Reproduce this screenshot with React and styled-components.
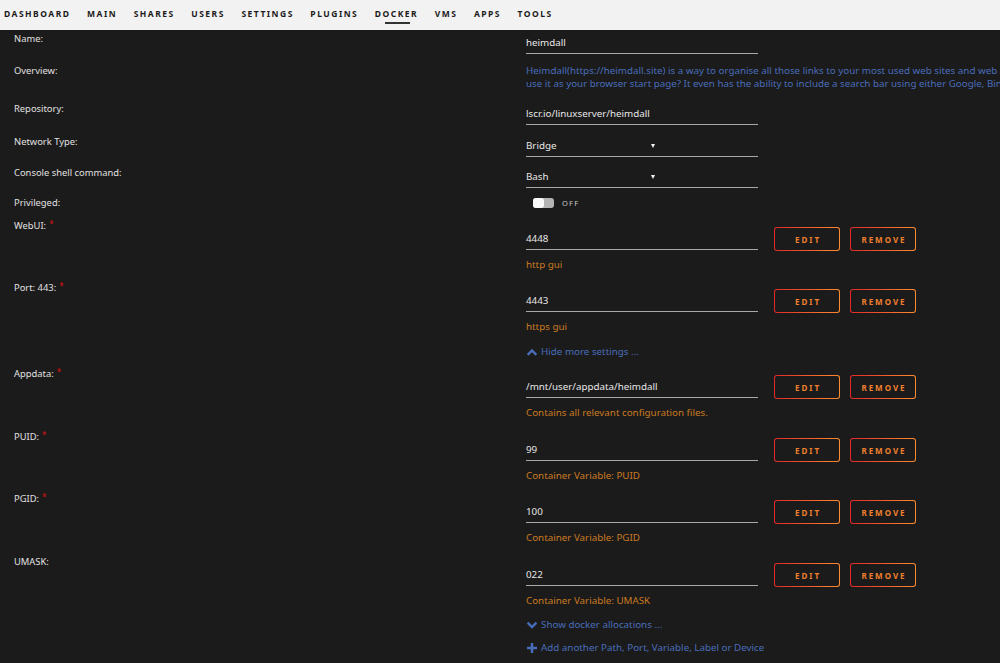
import React from 'react';
import styled, { createGlobalStyle } from 'styled-components';

const Global = createGlobalStyle`
  html, body {
    margin: 0;
    padding: 0;
    background: #1c1b1b;
    overflow: hidden;
  }
  body {
    font-family: "Noto Sans", "Open Sans", sans-serif;
  }
`;

const navItems = ['Dashboard', 'Main', 'Shares', 'Users', 'Settings', 'Plugins', 'Docker', 'VMs', 'Apps', 'Tools'];

const Page = styled.div`
  width: 1000px;
  min-height: 663px;
  background: #1c1b1b;
  overflow: hidden;
`;

const Nav = styled.nav`
  height: 30px;
  background: #f2f2f2;
  display: flex;
  align-items: center;
  gap: 16.5px;
  padding-left: 4px;
`;

const NavItem = styled.a`
  position: relative;
  font-size: 8.5px;
  font-weight: 700;
  letter-spacing: 1.5px;
  text-transform: uppercase;
  color: #1c1b1b;
  line-height: 30px;
  margin-top: -2px;

  &::after {
    content: '';
    display: ${({ $active }) => ($active ? 'block' : 'none')};
    position: absolute;
    left: 50%;
    bottom: 5px;
    width: 25px;
    height: 2px;
    margin-left: -11px;
    background: #333;
  }
`;

const Form = styled.div`
  padding-top: 2px;
`;

const Row = styled.div`
  display: grid;
  grid-template-columns: 512px 1fr;
  align-items: start;
  padding-left: 14px;
  min-height: ${({ $h }) => $h}px;
`;

const Label = styled.div`
  font-size: 9.4px;
  line-height: 14px;
  color: #e0e0e0;
`;

const Req = styled.sup`
  color: #d11;
  font-size: 8px;
  margin-left: 3px;
  vertical-align: 2px;
  line-height: 0;
`;

const Field = styled.div`
  margin-top: ${({ $offset }) => $offset || 0}px;
  display: flex;
  flex-direction: column;
`;

const ValueBox = styled.div`
  width: 232px;
  box-sizing: border-box;
  padding: ${({ $top }) => $top || 0}px 0 3px;
  border-bottom: 1px solid #a8a8a8;
  font-size: 9.8px;
  line-height: 14px;
  color: #e6e6e6;
  display: flex;
  justify-content: space-between;
  align-items: center;
`;

const Caret = styled.span`
  width: 0;
  height: 0;
  margin-right: 103px;
  border-left: 2.5px solid transparent;
  border-right: 2.5px solid transparent;
  border-top: 4px solid #f2f2f2;
`;

const Overview = styled.div`
  font-size: 9.8px;
  line-height: 13px;
  color: #486dba;
  white-space: nowrap;
`;

const Toggle = styled.div`
  display: flex;
  align-items: center;
  gap: 8px;
  height: 14px;
  padding-left: 7px;
`;

const Switch = styled.span`
  width: 21px;
  height: 10px;
  border-radius: 3px;
  background: #b4b4b4;
  display: flex;
`;

const Knob = styled.span`
  width: 11px;
  height: 10px;
  border-radius: 3px;
  background: #fafafa;
`;

const SwitchText = styled.span`
  font-size: 7.5px;
  letter-spacing: 1.2px;
  color: #c8c8c8;
`;

const Controls = styled.div`
  display: flex;
  align-items: flex-start;
`;

const Actions = styled.div`
  display: flex;
  gap: 10px;
  margin-left: 16px;
`;

const Button = styled.button`
  width: 66px;
  height: 24px;
  box-sizing: border-box;
  border: 1px solid transparent;
  border-radius: 3px;
  background: linear-gradient(#1c1b1b, #1c1b1b) padding-box,
    linear-gradient(90deg, #e22828, #ff8c2f) border-box;
  color: #f0802e;
  font-family: "Noto Sans", sans-serif;
  font-size: 8px;
  font-weight: 700;
  letter-spacing: 2px;
  text-transform: uppercase;
  padding: 0 0 0 2px;
  cursor: pointer;
`;

const Desc = styled.div`
  margin-top: 7px;
  font-size: 9.8px;
  line-height: 14px;
  color: #c97a22;
`;

const LinkRow = styled.a`
  display: flex;
  align-items: center;
  gap: 4px;
  padding-left: 527px;
  margin: ${({ $top }) => $top}px 0 ${({ $bottom }) => $bottom}px;
  font-size: 9.8px;
  line-height: 14px;
  color: #486dba;
`;

const Icon = ({ d }) => (
  <svg width="10" height="10" viewBox="0 0 10 10" fill="none" stroke="#486dba" strokeWidth="2.4" strokeLinecap="square">
    <path d={d} />
  </svg>
);

const chevronUp = 'M1.5 7 L5 3.5 L8.5 7';
const chevronDown = 'M1.5 3.5 L5 7 L8.5 3.5';
const plus = 'M5 1 V9 M1 5 H9';

const topConfigs = [
  { label: 'WebUI:', value: '4448', desc: 'http gui', req: true, h: 62 },
  { label: 'Port: 443:', value: '4443', desc: 'https gui', req: true, h: 62 },
];

const moreConfigs = [
  { label: 'Appdata:', value: '/mnt/user/appdata/heimdall', desc: 'Contains all relevant configuration files.', req: true, h: 63 },
  { label: 'PUID:', value: '99', desc: 'Container Variable: PUID', req: true, h: 62 },
  { label: 'PGID:', value: '100', desc: 'Container Variable: PGID', req: true, h: 63 },
  { label: 'UMASK:', value: '022', desc: 'Container Variable: UMASK', req: false, h: 62 },
];

const ConfigRow = ({ label, value, desc, req, h }) => (
  <Row $h={h}>
    <Label>
      {label}
      {req && <Req>*</Req>}
    </Label>
    <Field $offset={8}>
      <Controls>
        <ValueBox $top={5}>{value}</ValueBox>
        <Actions>
          <Button>Edit</Button>
          <Button>Remove</Button>
        </Actions>
      </Controls>
      <Desc>{desc}</Desc>
    </Field>
  </Row>
);

const App = () => (
  <Page>
    <Global />
    <Nav>
      {navItems.map((item) => (
        <NavItem key={item} $active={item === 'Docker'}>
          {item}
        </NavItem>
      ))}
    </Nav>
    <Form>
      <Row $h={32}>
        <Label>Name:</Label>
        <Field $offset={4}>
          <ValueBox>heimdall</ValueBox>
        </Field>
      </Row>
      <Row $h={38}>
        <Label>Overview:</Label>
        <Field>
          <Overview>
            Heimdall(https://heimdall.site) is a way to organise all those links to your most used web sites and web applications in a simple way. Why not
          </Overview>
          <Overview>
            use it as your browser start page? It even has the ability to include a search bar using either Google, Bing or DuckDuckGo.
          </Overview>
        </Field>
      </Row>
      <Row $h={33}>
        <Label>Repository:</Label>
        <Field $offset={5}>
          <ValueBox>lscr.io/linuxserver/heimdall</ValueBox>
        </Field>
      </Row>
      <Row $h={31}>
        <Label>Network Type:</Label>
        <Field $offset={4}>
          <ValueBox>
            Bridge
            <Caret />
          </ValueBox>
        </Field>
      </Row>
      <Row $h={30}>
        <Label>Console shell command:</Label>
        <Field $offset={4}>
          <ValueBox>
            Bash
            <Caret />
          </ValueBox>
        </Field>
      </Row>
      <Row $h={23}>
        <Label>Privileged:</Label>
        <Field>
          <Toggle>
            <Switch>
              <Knob />
            </Switch>
            <SwitchText>OFF</SwitchText>
          </Toggle>
        </Field>
      </Row>
      {topConfigs.map((c) => (
        <ConfigRow key={c.label} {...c} />
      ))}
      <LinkRow $top={2} $bottom={8}>
        <Icon d={chevronUp} />
        Hide more settings ...
      </LinkRow>
      {moreConfigs.map((c) => (
        <ConfigRow key={c.label} {...c} />
      ))}
      <LinkRow $top={1} $bottom={9}>
        <Icon d={chevronDown} />
        Show docker allocations ...
      </LinkRow>
      <LinkRow $top={0} $bottom={0}>
        <Icon d={plus} />
        Add another Path, Port, Variable, Label or Device
      </LinkRow>
    </Form>
  </Page>
);

export default App;
